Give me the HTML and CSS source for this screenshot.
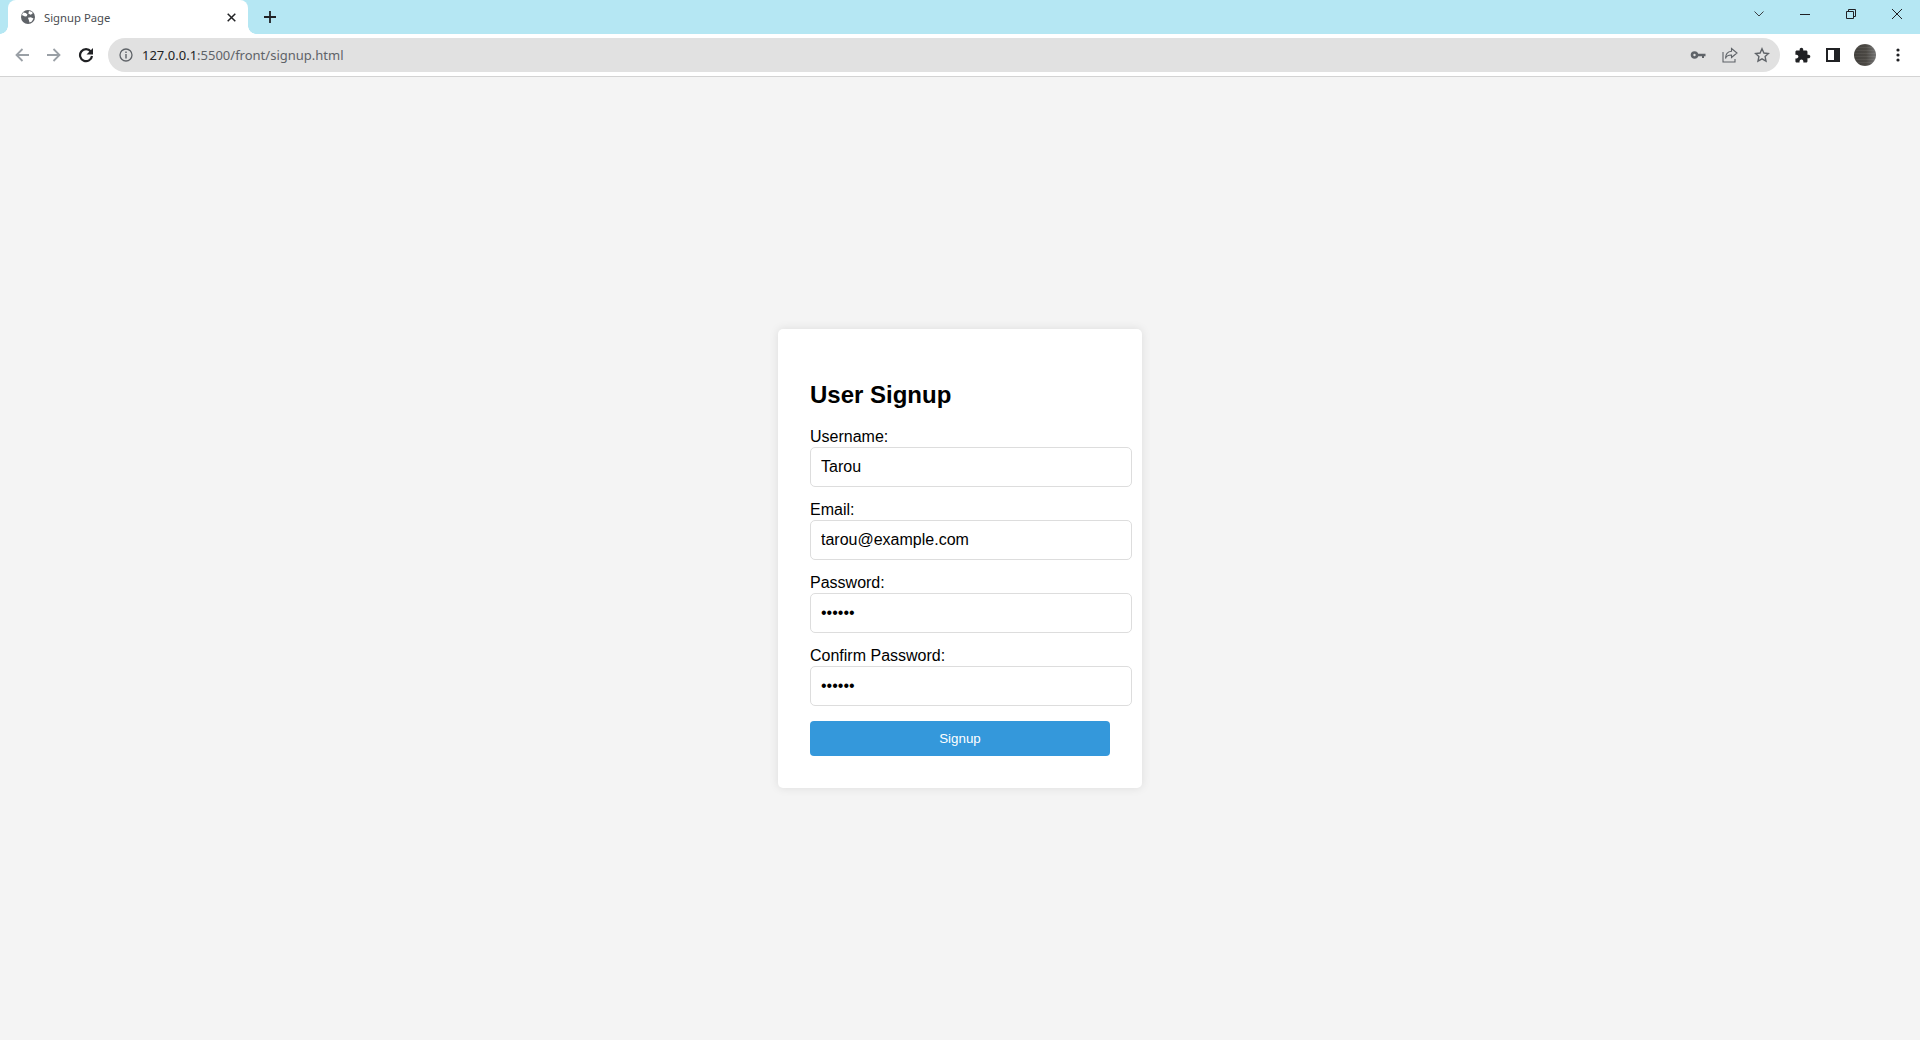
FILE: index.html
```html
<!DOCTYPE html>
<html lang="en">
<head>
    <meta charset="UTF-8">
    <meta name="viewport" content="width=device-width, initial-scale=1.0">
    <title>Signup Page</title>
    <link rel="stylesheet" href="styles.css">
</head>
<body>
    <div class="browser">
        <div class="tab-strip">
            <div class="tab">
                <svg class="tab-icon" viewBox="0 0 14 14">
                    <circle cx="7" cy="7" r="7" fill="#5f6368"/>
                    <path d="M2.2 2.6l2.6.4 1.700 1.500-.8 1.800-1.700.3L.9 5zM8 1l3.300 1.100.2 1.700-2 1-2.200-1.300zM6.900 7.800l2.900-.6 2.700 1.300-1.700 2.900-2.300 1.200-.6-2.400z" fill="#fff"/>
                </svg>
                <span class="tab-title">Signup Page</span>
                <svg class="tab-close" viewBox="0 0 9 9">
                    <path d="M.7.7l7.600 7.600M8.300.7L.7 8.300" stroke="#202124" stroke-width="1.500" fill="none"/>
                </svg>
            </div>
            <svg class="new-tab" viewBox="0 0 12 12">
                <path d="M6 0v12M0 6h12" stroke="#202124" stroke-width="1.800" fill="none"/>
            </svg>
            <div class="window-controls">
                <svg class="win-btn" viewBox="0 0 10 10">
                    <path d="M.5 2.500L5 7l4.500-4.500" stroke="#3c4043" stroke-width="1" fill="none"/>
                </svg>
                <svg class="win-btn" viewBox="0 0 10 10">
                    <path d="M0 5.500h10" stroke="#202124" stroke-width="1" fill="none"/>
                </svg>
                <svg class="win-btn" viewBox="0 0 10 10">
                    <path d="M.5 2.500h7v7h-7zM2.500 2.500v-2h7v7h-2" stroke="#202124" stroke-width="1" fill="none"/>
                </svg>
                <svg class="win-btn" viewBox="0 0 10 10">
                    <path d="M0 0l10 10M10 0L0 10" stroke="#202124" stroke-width="1" fill="none"/>
                </svg>
            </div>
        </div>
        <div class="toolbar">
            <svg class="nav-icon" viewBox="0 0 16 16">
                <path d="M15 8H2.500M8.500 2l-6 6 6 6" stroke="#9aa0a6" stroke-width="1.800" fill="none"/>
            </svg>
            <svg class="nav-icon" viewBox="0 0 16 16">
                <path d="M1 8h12.500M7.500 2l6 6-6 6" stroke="#9aa0a6" stroke-width="1.800" fill="none"/>
            </svg>
            <svg class="nav-icon" viewBox="0 0 16 16">
                <path d="M12.800 4.500A6 6 0 1 0 14 9" stroke="#202124" stroke-width="2.200" fill="none"/>
                <path d="M15 1v6.500H8.500z" fill="#202124"/>
            </svg>
            <div class="omnibox">
                <svg class="info-icon" viewBox="0 0 14 14">
                    <circle cx="7" cy="7" r="6" stroke="#5f6368" stroke-width="1.300" fill="none"/>
                    <path d="M7 6v4.500M7 3.500V5" stroke="#5f6368" stroke-width="1.400" fill="none"/>
                </svg>
                <span class="url"><span class="url-host">127.0.0.1</span>:5500/front/signup.html</span>
                <div class="omnibox-icons">
                    <svg class="omni-icon" viewBox="0 0 16 16">
                        <circle cx="4.500" cy="8" r="2.500" stroke="#5f6368" stroke-width="2.600" fill="none"/>
                        <path d="M7 6.700h8.500v2.600H14V11h-2V9.300H7z" fill="#5f6368"/>
                    </svg>
                    <svg class="omni-icon" viewBox="0 0 16 16">
                        <path d="M9.500 1.500L15 6l-5.500 4.500V8C6 8 4 9.500 3.500 11.500 3.500 7 6 4.500 9.500 4.200zM1 5v10h12v-3" stroke="#5f6368" stroke-width="1.100" fill="none"/>
                    </svg>
                    <svg class="omni-icon" viewBox="0 0 16 16">
                        <path d="M8 1.800l1.900 4.200 4.600.5-3.400 3.100.9 4.600L8 11.900l-4 2.300.9-4.600L1.500 6.500 6.100 6z" stroke="#5f6368" stroke-width="1.400" fill="none"/>
                    </svg>
                </div>
            </div>
            <svg class="puzzle-icon" viewBox="0 0 24 24">
                <path d="M20.500 11H19V7c0-1.100-.9-2-2-2h-4V3.500C13 2.120 11.880 1 10.500 1S8 2.120 8 3.500V5H4c-1.100 0-1.990.9-1.990 2v3.800H3.500c1.490 0 2.700 1.210 2.700 2.700s-1.210 2.700-2.700 2.700H2V20c0 1.100.9 2 2 2h3.800v-1.500c0-1.490 1.210-2.700 2.700-2.700 1.490 0 2.700 1.210 2.700 2.700V22H17c1.100 0 2-.9 2-2v-4h1.500c1.380 0 2.500-1.120 2.500-2.500S21.880 11 20.500 11z" fill="#202124"/>
            </svg>
            <svg class="panel-icon" viewBox="0 0 14 14">
                <path fill-rule="evenodd" d="M0 0h14v14H0zM2 2v10h6V2z" fill="#202124"/>
            </svg>
            <div class="avatar"></div>
            <svg class="menu-icon" viewBox="0 0 4 14">
                <circle cx="2" cy="2" r="1.600" fill="#202124"/>
                <circle cx="2" cy="7" r="1.600" fill="#202124"/>
                <circle cx="2" cy="12" r="1.600" fill="#202124"/>
            </svg>
        </div>
    </div>

    <main class="page">
        <div class="signup-card">
            <h2>User Signup</h2>
            <form>
                <div class="form-group">
                    <label for="username">Username:</label>
                    <input type="text" id="username" value="Tarou">
                </div>
                <div class="form-group">
                    <label for="email">Email:</label>
                    <input type="email" id="email" value="tarou@example.com">
                </div>
                <div class="form-group">
                    <label for="password">Password:</label>
                    <input type="password" id="password" value="secret">
                </div>
                <div class="form-group">
                    <label for="confirm">Confirm Password:</label>
                    <input type="password" id="confirm" value="secret">
                </div>
                <button type="button">Signup</button>
            </form>
        </div>
    </main>
</body>
</html>
```

FILE: styles.css
```css
body {
    margin: 0;
    height: 100vh;
    display: flex;
    flex-direction: column;
    background-color: #f4f4f4;
    font-family: "Liberation Sans", Arial, sans-serif;
}

/* browser chrome */
.browser {
    flex: none;
    background-color: #fff;
    border-bottom: 1px solid #d3d3d3;
}

.tab-strip {
    height: 34px;
    display: flex;
    align-items: flex-end;
    background-color: #b5e7f3;
}

.tab {
    position: relative;
    width: 240px;
    height: 34px;
    margin-left: 8px;
    padding: 0 12px 0 13px;
    box-sizing: border-box;
    display: flex;
    align-items: center;
    background-color: #fff;
    border-radius: 8px 8px 0 0;
}

.tab::before,
.tab::after {
    content: "";
    position: absolute;
    bottom: 0;
    width: 8px;
    height: 8px;
}

.tab::before {
    left: -8px;
    background: radial-gradient(circle at 0 0, #b5e7f3 7.500px, #fff 8px);
}

.tab::after {
    right: -8px;
    background: radial-gradient(circle at 100% 0, #b5e7f3 7.500px, #fff 8px);
}

.tab-icon {
    width: 14px;
    height: 14px;
    flex: none;
}

.tab-title {
    flex: 1;
    margin-left: 9px;
    font-family: "Noto Sans", sans-serif;
    font-size: 11.300px;
    color: #4a4d51;
}

.tab-close {
    width: 9px;
    height: 9px;
}

.new-tab {
    width: 12px;
    height: 12px;
    margin: 0 0 11px 16px;
}

.window-controls {
    margin-left: auto;
    align-self: stretch;
    display: flex;
    align-items: center;
    gap: 36px;
    padding: 0 18px 6px 0;
}

.win-btn {
    width: 10px;
    height: 10px;
}

.toolbar {
    height: 42px;
    display: flex;
    align-items: center;
    padding-left: 14px;
}

.nav-icon {
    width: 16px;
    height: 16px;
    margin-right: 16px;
    flex: none;
}

.omnibox {
    width: 1672px;
    height: 34px;
    margin-left: -2px;
    padding: 0 10px 0 11px;
    box-sizing: border-box;
    display: flex;
    align-items: center;
    background-color: #e1e1e1;
    border-radius: 17px;
}

.info-icon {
    width: 14px;
    height: 14px;
    flex: none;
}

.url {
    margin-left: 9px;
    font-family: "Noto Sans", sans-serif;
    font-size: 13px;
    color: #5f6368;
}

.url-host {
    color: #202124;
}

.omnibox-icons {
    margin-left: auto;
    display: flex;
    gap: 16px;
}

.omni-icon {
    width: 16px;
    height: 16px;
}

.puzzle-icon {
    width: 17px;
    height: 17px;
    margin-left: 14px;
    flex: none;
}

.panel-icon {
    width: 14px;
    height: 14px;
    margin-left: 15px;
    flex: none;
}

.avatar {
    width: 22px;
    height: 22px;
    margin-left: 14px;
    border-radius: 50%;
    background:
        repeating-linear-gradient(0deg, rgba(255, 255, 255, 0.05) 0 1px, rgba(0, 0, 0, 0.05) 1px 3px),
        linear-gradient(90deg, #45433f, #4f4c47 55%, #7a7a7a);
    flex: none;
}

.menu-icon {
    width: 4px;
    height: 14px;
    margin-left: 20px;
    flex: none;
}

/* signup page */
.page {
    flex: 1;
    display: flex;
    align-items: center;
    justify-content: center;
}

.signup-card {
    width: 300px;
    padding: 32px;
    background-color: #fff;
    border-radius: 5px;
    box-shadow: 0 0 10px rgba(0, 0, 0, 0.1);
}

h2 {
    margin: 20px 0;
    font-size: 24px;
    line-height: 27px;
}

.form-group {
    margin-bottom: 14px;
}

label {
    display: block;
    margin-bottom: 1px;
    font-size: 16px;
    line-height: 18px;
    color: #000;
}

input {
    display: block;
    width: 100%;
    height: 18px;
    padding: 10px;
    border: 1px solid #ddd;
    border-radius: 5px;
    font-family: "Liberation Sans", Arial, sans-serif;
    font-size: 16px;
    outline: none;
}

button {
    display: block;
    width: 100%;
    height: 35px;
    margin-top: 15px;
    padding: 0;
    border: none;
    border-radius: 4px;
    background-color: #3498db;
    color: #fff;
    font-family: "Liberation Sans", Arial, sans-serif;
    font-size: 13.330px;
}
```
